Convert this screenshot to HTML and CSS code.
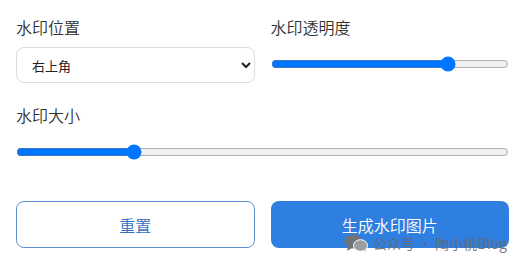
FILE: index.html
```html
<!DOCTYPE html>
<html lang="zh-CN">
<head>
    <meta charset="UTF-8">
    <meta name="viewport" content="width=device-width, initial-scale=1.0">
    <title>水印设置</title>
    <link rel="stylesheet" href="styles.css">
</head>
<body>
    <div class="container">
        <div class="form-row">
            <div class="form-group">
                <label for="position">水印位置</label>
                <select id="position">
                    <option>右上角</option>
                    <option>左上角</option>
                    <option>右下角</option>
                    <option>左下角</option>
                    <option>居中</option>
                </select>
            </div>
            <div class="form-group">
                <label for="opacity">水印透明度</label>
                <input type="range" id="opacity" min="0" max="100" value="76">
            </div>
        </div>

        <div class="form-group">
            <label for="size">水印大小</label>
            <input type="range" id="size" min="0" max="100" value="23">
        </div>

        <div class="actions">
            <button class="btn btn-outline">重置</button>
            <button class="btn btn-primary">生成水印图片</button>
        </div>
    </div>

    <!-- 公众号水印 -->
    <div class="credit">
        <svg class="credit-icon" width="24" height="18" viewBox="0 0 24 18">
            <ellipse cx="9" cy="7.5" rx="8.5" ry="7" fill="#6f7378"/>
            <path d="M4 13 L3 17 L8 14 Z" fill="#6f7378"/>
            <ellipse cx="16.5" cy="11.5" rx="7" ry="5.8" fill="#9a9da1" stroke="#fff" stroke-width="1"/>
            <path d="M20 16 L22 18 L21 15 Z" fill="#9a9da1"/>
        </svg>
        <span>公众号 · 陶小桃Blog</span>
    </div>
</body>
</html>
```

FILE: styles.css
```css
* {
    margin: 0;
    padding: 0;
    box-sizing: border-box;
}

body {
    font-family: "Noto Sans CJK SC", "Noto Sans", sans-serif;
    background: #fff;
    color: #333;
    width: 527px;
    height: 263px;
    overflow: hidden;
    position: relative;
}

.container {
    padding: 15px 18px 0 16px;
}

.form-row {
    display: grid;
    grid-template-columns: 1fr 1fr;
    gap: 16px;
}

.form-group {
    margin-bottom: 20px;
}

label {
    display: block;
    font-size: 16px;
    font-weight: 350;
    line-height: 24px;
    color: #333;
    margin-bottom: 8px;
}

select {
    width: 100%;
    height: 36px;
    padding: 0 8px 0 11px;
    border: 1px solid #dcdcdc;
    border-radius: 8px;
    background: #fff;
    font-family: inherit;
    font-size: 13px;
    color: #222;
}

input[type="range"] {
    display: block;
    width: 100%;
    margin: 17px 0 8px;
    accent-color: #0075ff;
}

.actions {
    display: grid;
    grid-template-columns: 1fr 1fr;
    gap: 16px;
    margin-top: 41px;
}

.btn {
    height: 47px;
    border-radius: 8px;
    font-family: inherit;
    font-size: 16px;
    font-weight: 350;
    cursor: pointer;
}

.btn-outline {
    background: #fff;
    border: 1px solid #5b8fd0;
    color: #2f6fc0;
}

.btn-primary {
    background: #2f7fe0;
    border: none;
    color: #fff;
}

.credit {
    position: absolute;
    left: 344px;
    top: 233px;
    display: flex;
    align-items: center;
    gap: 5px;
    font-size: 14px;
    color: rgba(100, 104, 110, 0.9);
}
```
